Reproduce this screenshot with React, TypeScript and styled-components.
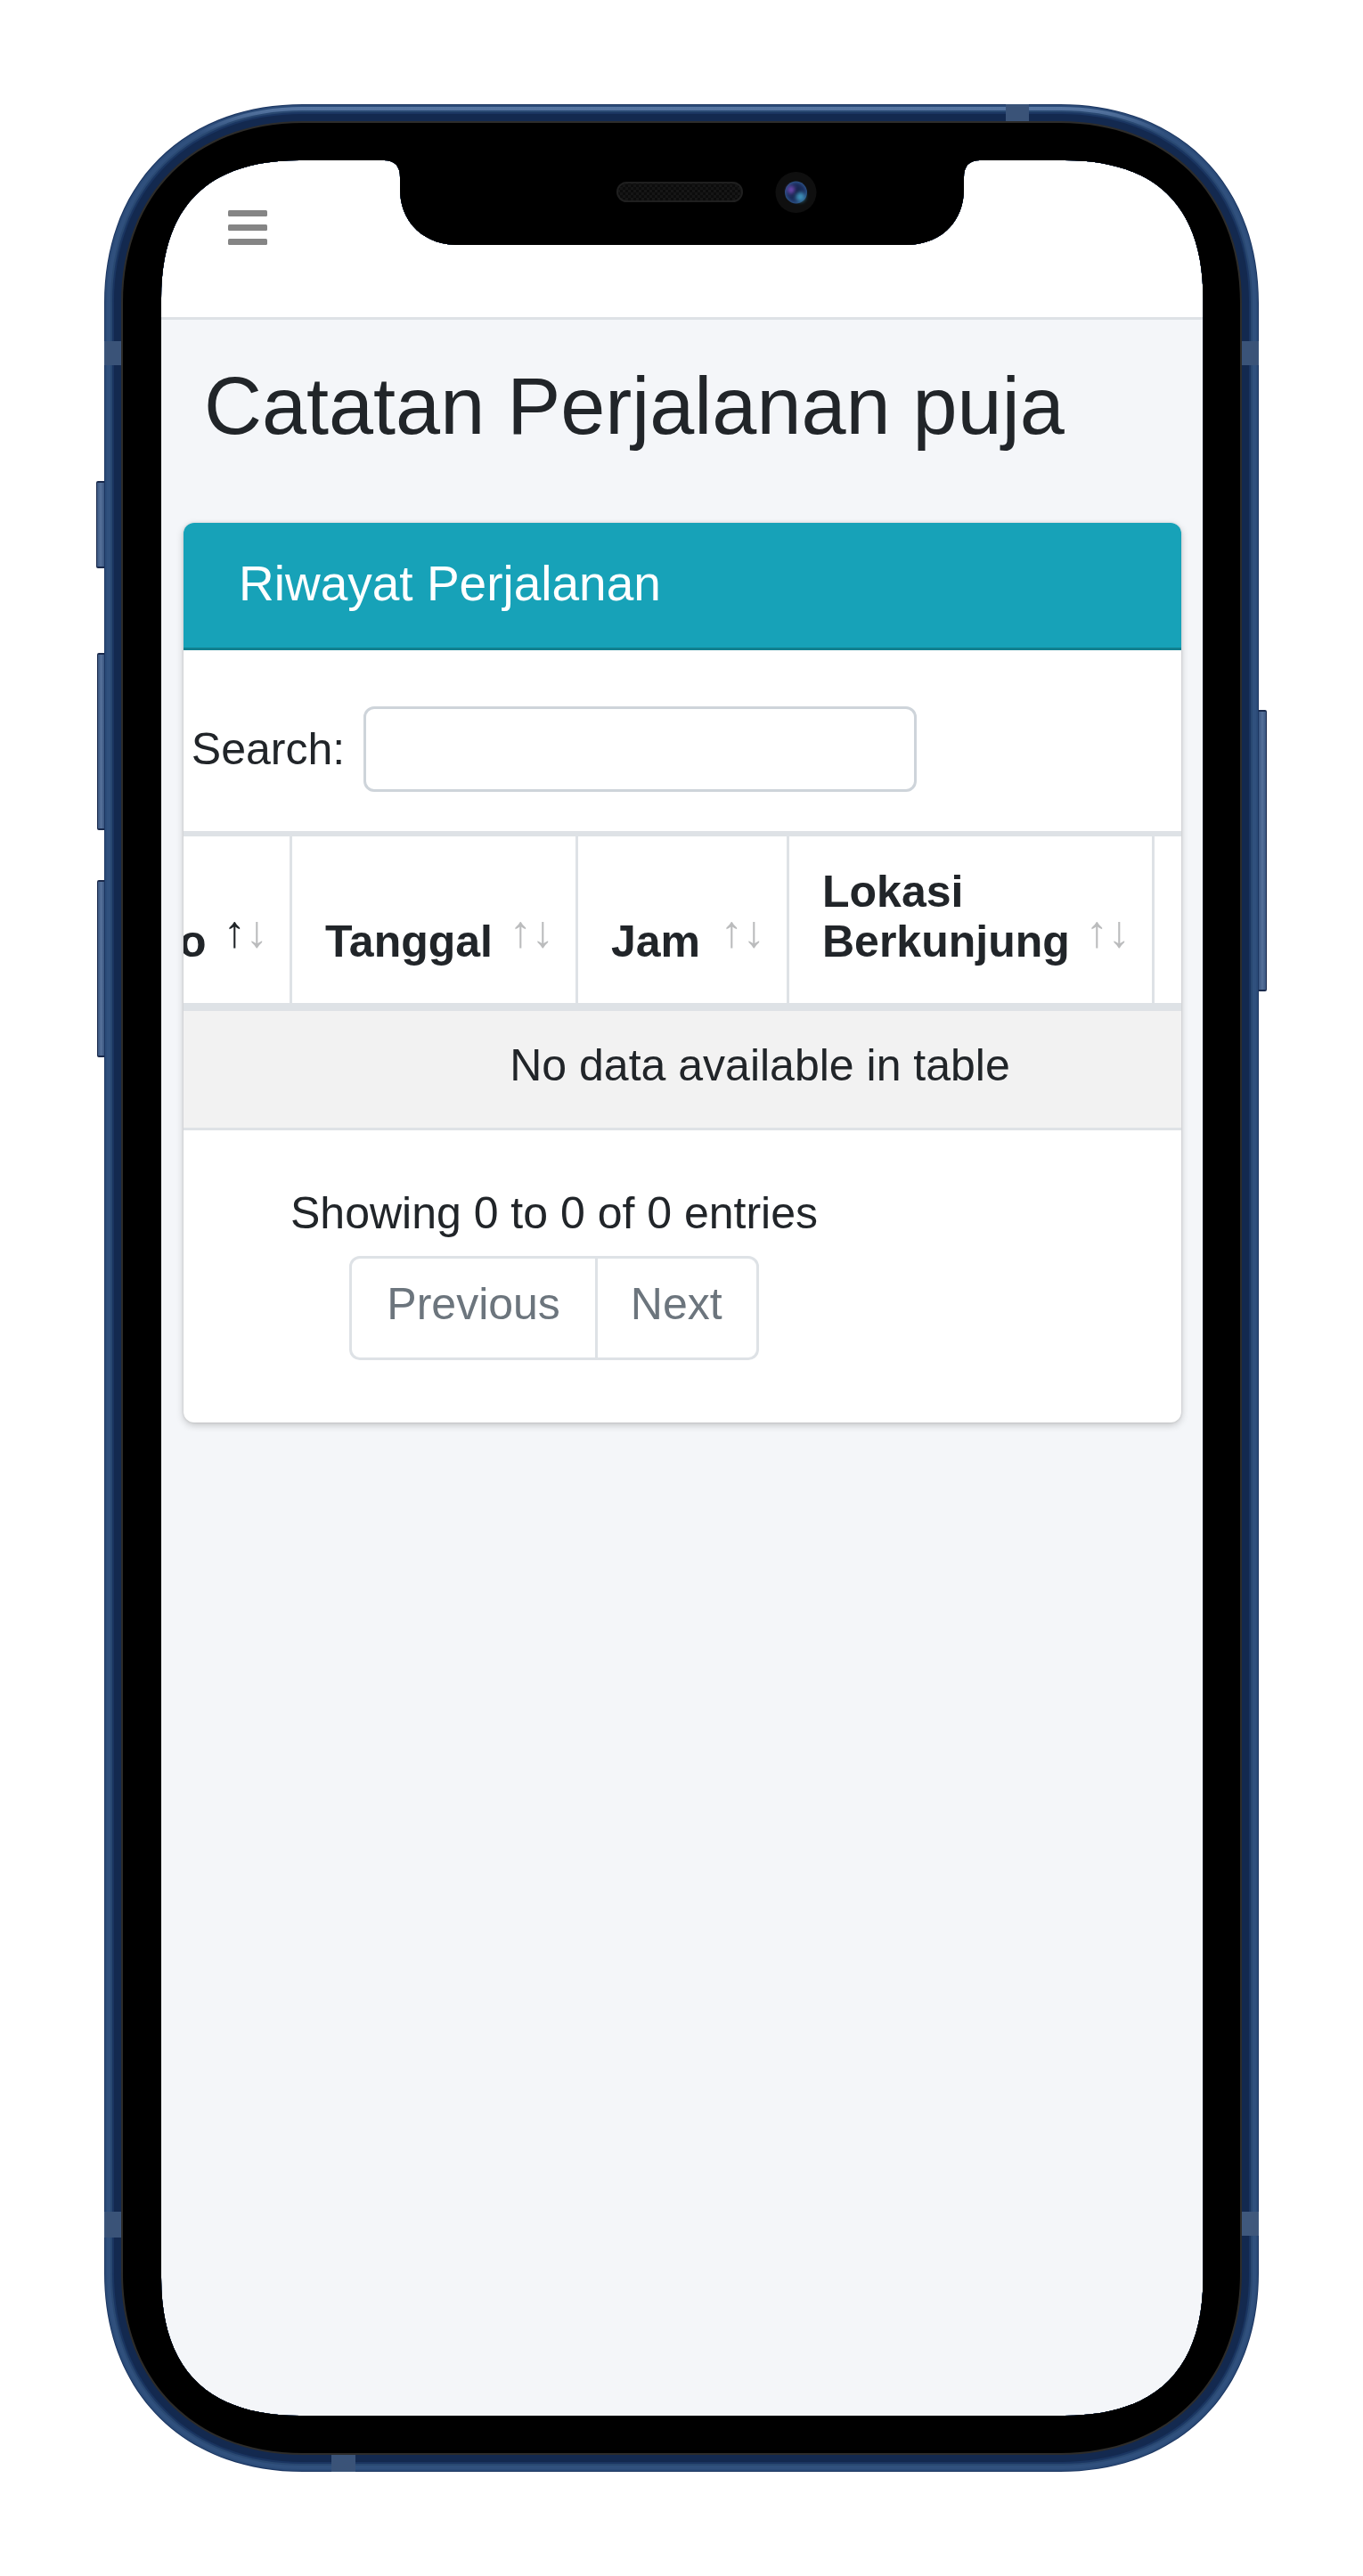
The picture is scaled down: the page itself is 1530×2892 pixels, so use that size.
import { FunctionComponent } from 'react';
import styled, { createGlobalStyle } from 'styled-components';

const GlobalStyle = createGlobalStyle`
  html, body {
    margin: 0;
    background: #fff;
    font-family: "Liberation Sans", Arial, sans-serif;
    color: #212529;
  }
  * { box-sizing: border-box; }
`;

// corner with adjustable roundness, k = 0.55 is about a circle
const roundedRect = (x: number, y: number, w: number, h: number, r: number, k = 0.6) => {
  const c = r - r * k;
  const x2 = x + w;
  const y2 = y + h;
  return `M${x},${y + r} C${x},${y + c} ${x + c},${y} ${x + r},${y} H${x2 - r} C${x2 - c},${y} ${x2},${y + c} ${x2},${y + r} V${y2 - r} C${x2},${y2 - c} ${x2 - c},${y2} ${x2 - r},${y2} H${x + r} C${x + c},${y2} ${x},${y2 - c} ${x},${y2 - r} Z`;
};

const rings = [
  { inset: 0, color: '#1b3560' },
  { inset: 1, color: '#2b4b78' },
  { inset: 3, color: 'url(#ringLight)' },
  { inset: 7, color: '#294871' },
  { inset: 9, color: '#1a3561' },
  { inset: 11, color: '#13294f' },
  { inset: 19, color: '#2d2c2a' },
  { inset: 21, color: '#000' },
];

const screenHole =
  'M181,335 C181,232 233,180 336,180 H431 Q449,180 449,199 V212 C449,250 476,275 514,275 H1017 C1055,275 1082,250 1082,212 V199 Q1082,180 1100,180 H1195 C1298,180 1350.5,232 1350.5,335 V2557 C1350.5,2660 1298,2712 1195,2712 H336 C233,2712 181,2660 181,2557 Z';

const Bezel = () => (
  <BezelSvg viewBox="117 117 1296 2658">
    <defs>
      <linearGradient id="ringLight" gradientUnits="userSpaceOnUse" x1="0" y1="117" x2="0" y2="150">
        <stop offset="0" stopColor="#5c7ba6" />
        <stop offset="1" stopColor="#30507d" />
      </linearGradient>
      <pattern id="mesh" width="6" height="6" patternUnits="userSpaceOnUse">
        <rect width="6" height="6" fill="#0c0c0c" />
        <rect width="3" height="3" fill="#161616" />
        <rect x="3" y="3" width="3" height="3" fill="#161616" />
      </pattern>
      <radialGradient id="lens" cx="0.5" cy="0.5" r="0.55">
        <stop offset="0" stopColor="#121a3c" />
        <stop offset="0.65" stopColor="#1c2f5e" />
        <stop offset="1" stopColor="#2f5a90" />
      </radialGradient>
      <filter id="soft" x="-60%" y="-60%" width="220%" height="220%">
        <feGaussianBlur stdDeviation="2" />
      </filter>
    </defs>

    {rings.map(ring => (
      <path
        key={ring.inset}
        fill={ring.color}
        fillRule="evenodd"
        d={`${roundedRect(117 + ring.inset, 117 + ring.inset, 1296 - ring.inset * 2, 2658 - ring.inset * 2, 223 - ring.inset)} ${screenHole}`}
      />
    ))}

    <rect x="1129" y="117" width="26" height="19" fill="#3a5378" />
    <rect x="372" y="2756" width="27" height="19" fill="#3a5378" />
    <rect x="117" y="383" width="19" height="27" fill="#3a5378" />
    <rect x="1394" y="383" width="19" height="27" fill="#3a5378" />
    <rect x="117" y="2483" width="19" height="29" fill="#3a5378" />
    <rect x="1394" y="2483" width="19" height="27" fill="#3f587c" />

    <rect x="693" y="205" width="140" height="21" rx="10.5" fill="url(#mesh)" stroke="#1f1f1f" strokeWidth="2" />

    <circle cx="893.5" cy="216" r="23" fill="#0f0f0f" />
    <circle cx="893.5" cy="216" r="12.5" fill="url(#lens)" />
    <circle cx="888" cy="213" r="4.2" fill="#7048b0" filter="url(#soft)" />
    <circle cx="898.5" cy="221" r="5.2" fill="#3c90b8" filter="url(#soft)" />
  </BezelSvg>
);

const Hamburger = () => (
  <MenuIcon viewBox="0 0 44 39" aria-hidden="true">
    <rect y="0" width="44" height="7" rx="1.5" />
    <rect y="16" width="44" height="7" rx="1.5" />
    <rect y="32" width="44" height="7" rx="1.5" />
  </MenuIcon>
);

const App: FunctionComponent = () => {
  return (
    <Page>
      <GlobalStyle />
      <Phone>
        <SideButton $side="left" $top={423} $height={98} $width={9} />
        <SideButton $side="left" $top={616} $height={199} $width={8} />
        <SideButton $side="left" $top={871} $height={199} $width={8} />
        <SideButton $side="right" $top={680} $height={316} $width={9} />

        <Screen>
          <NavBar>
            <Hamburger />
          </NavBar>

          <Title>Catatan Perjalanan puja</Title>

          <Card>
            <CardHeader>Riwayat Perjalanan</CardHeader>

            <SearchRow>
              <SearchLabel>Search:</SearchLabel>
              <SearchInput type="search" />
            </SearchRow>

            <TableClip>
              <DataTable>
                <colgroup>
                  <col width="200" />
                  <col width="321" />
                  <col width="237" />
                  <col width="410" />
                  <col width="278" />
                </colgroup>
                <thead>
                  <tr>
                    <HeadCell $sorted>No</HeadCell>
                    <HeadCell>Tanggal</HeadCell>
                    <HeadCell>Jam</HeadCell>
                    <HeadCell>Lokasi Berkunjung</HeadCell>
                    <HeadCell />
                  </tr>
                </thead>
                <tbody>
                  <tr>
                    <EmptyCell colSpan={5}>No data available in table</EmptyCell>
                  </tr>
                </tbody>
              </DataTable>
            </TableClip>

            <TableFooter>
              <Info>Showing 0 to 0 of 0 entries</Info>
              <Pagination>
                <PageLink>Previous</PageLink>
                <PageLink>Next</PageLink>
              </Pagination>
            </TableFooter>
          </Card>
        </Screen>

        <Bezel />
      </Phone>
    </Page>
  );
};

export default App;

const Page = styled.div`
display: flex;
justify-content: center;
padding: 117px 0;
`;

const Phone = styled.div`
position: relative;
width: 1296px;
height: 2658px;
padding: 63px 0 0 64px;
`;

const BezelSvg = styled.svg`
position: absolute;
inset: 0;
width: 1296px;
height: 2658px;
pointer-events: none;
`;

const SideButton = styled.div<{ $side: 'left' | 'right'; $top: number; $height: number; $width: number }>`
position: absolute;
top: ${p => p.$top}px;
${p => p.$side}: -${p => p.$width}px;
width: ${p => p.$width}px;
height: ${p => p.$height}px;
background: linear-gradient(90deg, #3a5680, #56719a 50%, #3a5680);
border-top: 2px solid #1a2a4c;
border-bottom: 2px solid #1a2a4c;
border-${p => p.$side}: 1px solid #1a2a4c;
border-radius: ${p => (p.$side === 'left' ? '2px 0 0 2px' : '0 2px 2px 0')};
`;

const Screen = styled.div`
width: 1170px;
height: 2532px;
background: #f4f6f9;
overflow: hidden;
`;

const NavBar = styled.div`
height: 179px;
background: #fff;
border-bottom: 3px solid #dee2e6;
padding: 56px 0 0 75px;
`;

const MenuIcon = styled.svg`
display: block;
width: 44px;
height: 39px;
fill: #858585;
`;

const Title = styled.h1`
margin: 0;
padding: 43px 0 77px 48px;
font-size: 90px;
font-weight: 400;
line-height: 1.2;
color: #212529;
`;

const Card = styled.div`
margin: 0 25px;
background: #fff;
border-radius: 12px;
box-shadow: 0 0 3px rgba(0, 0, 0, 0.125), 0 3px 9px rgba(0, 0, 0, 0.2);
overflow: hidden;
`;

const CardHeader = styled.div`
height: 143px;
padding: 0 0 5px 62px;
display: flex;
align-items: center;
background: #17a2b8;
border-bottom: 3px solid #11808f;
color: #fff;
font-size: 55px;
`;

const SearchRow = styled.label`
width: 832px;
height: 203px;
display: flex;
align-items: center;
justify-content: center;
gap: 21px;
padding-top: 19px;
font-size: 50px;
`;

const SearchLabel = styled.span`
line-height: 57px;
`;

const SearchInput = styled.input`
width: 621px;
height: 96px;
background: #fff;
border: 3px solid #ced4da;
border-radius: 12px;
outline: none;
appearance: none;
`;

const TableClip = styled.div`
overflow: hidden;
`;

const DataTable = styled.table`
width: 1446px;
margin-left: -78px;
table-layout: fixed;
border-collapse: separate;
border-spacing: 0;
border-top: 6px solid #dee2e6;
font-size: 50px;
line-height: 57px;
`;

const HeadCell = styled.th<{ $sorted?: boolean }>`
position: relative;
padding: 34px 75px 41px 37px;
vertical-align: bottom;
text-align: left;
font-weight: 700;
line-height: 56px;
border-right: 3px solid #dee2e6;
border-bottom: 9px solid #dee2e6;

&::before,
&::after {
  position: absolute;
  bottom: 50px;
  font-weight: 700;
  line-height: 1.2;
  opacity: 0.3;
}

&::before {
  content: "\\2191";
  right: 49px;
  opacity: ${p => (p.$sorted ? 1 : 0.3)};
}

&::after {
  content: "\\2193";
  right: 24px;
}

&:last-child::before,
&:last-child::after {
  content: none;
}
`;

const EmptyCell = styled.td`
padding: 33px 34px 0 38px;
height: 134px;
vertical-align: top;
text-align: center;
background: #f2f2f2;
border-bottom: 3px solid #dee2e6;
`;

const TableFooter = styled.div`
width: 832px;
display: flex;
flex-direction: column;
align-items: center;
padding: 65px 0 70px;
`;

const Info = styled.div`
font-size: 50px;
line-height: 57px;
`;

const Pagination = styled.div`
display: flex;
margin-top: 19px;
border: 3px solid #dee2e6;
border-radius: 12px;
`;

const PageLink = styled.div`
height: 111px;
padding: 20px 39px 0;
font-size: 50px;
line-height: 62px;
color: #6c757d;

& + & {
  padding: 20px 38px 0 37px;
  border-left: 3px solid #dee2e6;
}
`;
